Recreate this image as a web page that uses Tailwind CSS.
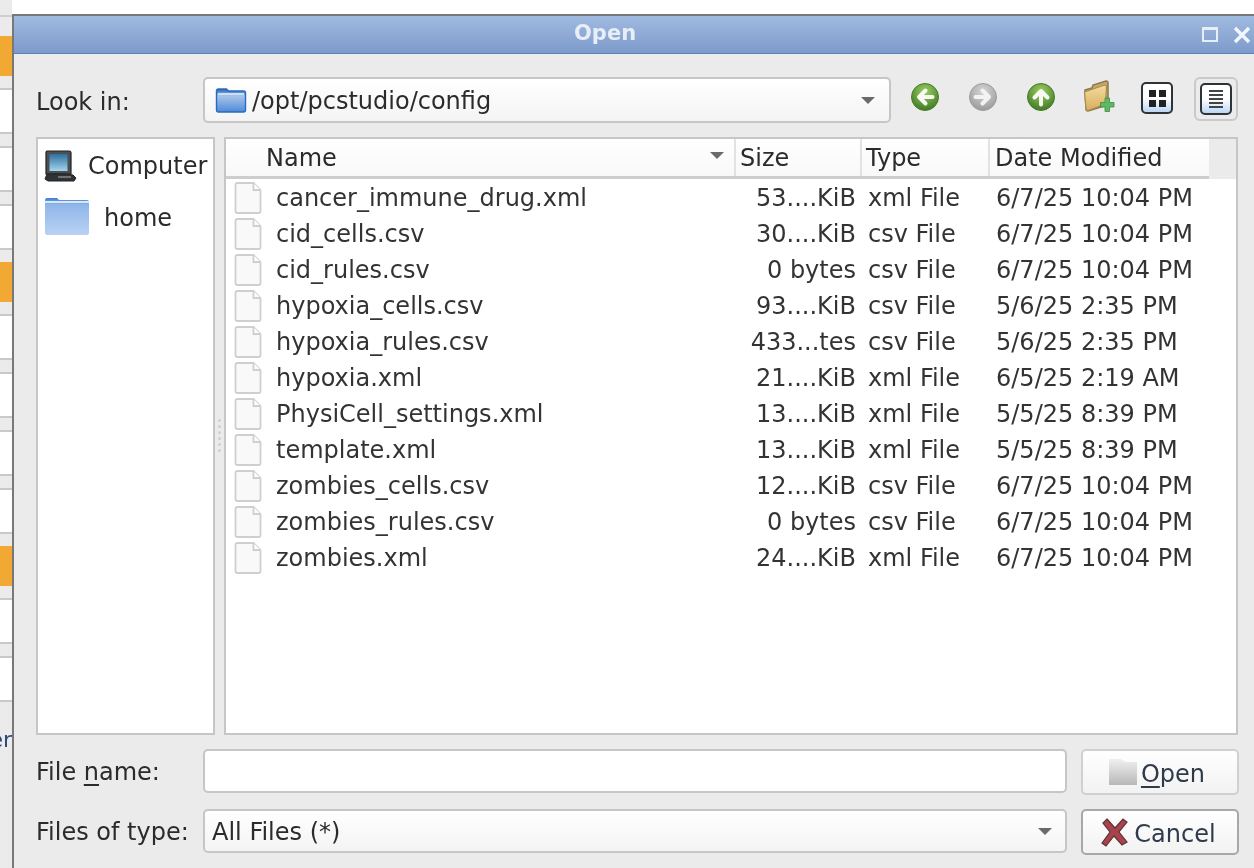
<!DOCTYPE html>
<html lang="en">
  <head>
    <meta charset="UTF-8" />
    <title>Open</title>
    <script src="https://cdn.jsdelivr.net/npm/@tailwindcss/browser@4"></script>
  </head>
  <body class="bg-white">
    <div class="flex w-[1254px] h-[868px] overflow-hidden bg-white text-[#2b2b2b] text-[24px] leading-none blur-[0.4px] font-['DejaVu_Sans',sans-serif]">
      <!-- App behind the dialog -->
      <div class="flex flex-col w-[12px] shrink-0 pt-[15px] bg-[#ebebeb] relative">
        <div class="h-[21px] border-t-2 border-[#cfcfcf]"></div>
        <div class="h-[40px] bg-[#f2a933]"></div>
        <div class="h-[12px]"></div>
        <div class="h-[46px] bg-white border-y-2 border-[#c9c9c9]"></div>
        <div class="h-[12px]"></div>
        <div class="h-[46px] bg-white border-y-2 border-[#c9c9c9]"></div>
        <div class="h-[12px]"></div>
        <div class="h-[46px] bg-white border-y-2 border-[#c9c9c9]"></div>
        <div class="h-[12px]"></div>
        <div class="h-[40px] bg-[#f2a933]"></div>
        <div class="h-[12px]"></div>
        <div class="h-[46px] bg-white border-y-2 border-[#c9c9c9]"></div>
        <div class="h-[12px]"></div>
        <div class="h-[46px] bg-white border-y-2 border-[#c9c9c9]"></div>
        <div class="h-[12px]"></div>
        <div class="h-[46px] bg-white border-y-2 border-[#c9c9c9]"></div>
        <div class="h-[12px]"></div>
        <div class="h-[46px] bg-white border-y-2 border-[#c9c9c9]"></div>
        <div class="h-[12px]"></div>
        <div class="h-[40px] bg-[#f2a933]"></div>
        <div class="h-[12px]"></div>
        <div class="h-[46px] bg-white border-y-2 border-[#c9c9c9]"></div>
        <div class="h-[12px]"></div>
        <div class="h-[46px] bg-white border-y-2 border-[#c9c9c9]"></div>
        <div class="absolute top-[729px] right-0 text-[#2b4a7a] text-[22px]">er</div>
      </div>

      <!-- Dialog -->
      <div class="flex flex-col flex-1 mt-[14px] border-l-2 border-t-2 border-[#787878] bg-[#ebebeb]">
        <!-- Title bar -->
        <div class="flex items-center h-[38px] shrink-0 pl-[560px] border-b border-[#5f80b5] bg-gradient-to-b from-[#a0bbe0] to-[#7d9acb] text-white">
          <span class="w-[628px] pb-[2px] text-[21px] font-bold text-[#e8eef8]">Open</span>
          <span class="w-[16px] h-[15px] border-2 border-t-[3px] border-[#e8eef8]"></span>
          <svg class="ml-[15px]" width="18" height="18" viewBox="0 0 18 18"><path d="M2 2l14 14M16 2L2 16" stroke="#f2f5fb" stroke-width="3.4" /></svg>
        </div>

        <div class="flex flex-col flex-1 pl-[22px] pr-[15px] pt-[23px]">
          <!-- Look in -->
          <div class="flex items-start h-[60px] shrink-0">
            <span class="w-[167px] pt-[13px]">Look in:</span>
            <div class="flex items-center w-[688px] h-[46px] rounded-[5px] border-2 border-[#c6c6c6] bg-gradient-to-b from-white to-[#f4f4f4] pl-[10px] pr-[14px]">
              <svg width="32" height="28" viewBox="0 0 32 28"><defs><linearGradient id="fa" x1="0" y1="0" x2="0" y2="1"><stop offset="0" stop-color="#1f5fb4" /><stop offset="0.3" stop-color="#a8c4ea" /><stop offset="1" stop-color="#4f8ad8" /></linearGradient></defs><path d="M1.5 5q0-2 2-2h8l2 2h15q2 0 2 2v17q0 2-2 2h-25q-2 0-2-2z" fill="url(#fa)" stroke="#2a6bc0" stroke-width="1.4" /><path d="M3 8h26" stroke="#e8f0fb" stroke-width="1.5" /></svg>
              <span class="ml-[5px] pt-[2px] flex-1">/opt/pcstudio/config</span>
              <span class="w-0 h-0 border-x-[7px] border-x-transparent border-t-[7px] border-t-[#6a6a6a]"></span>
            </div>
            <div class="flex items-start">
              <!-- back -->
              <svg class="ml-[19px] mt-[5px]" width="30" height="30" viewBox="0 0 30 30"><defs><radialGradient id="gr" cx="0.5" cy="0.3" r="0.75"><stop offset="0" stop-color="#9ccf62" /><stop offset="1" stop-color="#3a7420" /></radialGradient><radialGradient id="gy" cx="0.5" cy="0.3" r="0.75"><stop offset="0" stop-color="#d6d6d6" /><stop offset="1" stop-color="#979797" /></radialGradient></defs><circle cx="15" cy="15" r="13.5" fill="url(#gr)" stroke="#4a7d2c" stroke-width="1" /><path d="M22.500 15H9.500M15.500 8.500L9 15l6.500 6.500" fill="none" stroke="#f6f8f2" stroke-width="4" stroke-linecap="round" stroke-linejoin="round" /></svg>
              <!-- forward -->
              <svg class="ml-[28px] mt-[5px]" width="30" height="30" viewBox="0 0 30 30"><circle cx="15" cy="15" r="13.5" fill="url(#gy)" stroke="#9d9d9d" stroke-width="1" /><path d="M7.500 15h13M14.500 8.500L21 15l-6.500 6.500" fill="none" stroke="#f3f3f3" stroke-width="4" stroke-linecap="round" stroke-linejoin="round" /></svg>
              <!-- up -->
              <svg class="ml-[28px] mt-[5px]" width="30" height="30" viewBox="0 0 30 30"><circle cx="15" cy="15" r="13.5" fill="url(#gr)" stroke="#4a7d2c" stroke-width="1" /><path d="M15 22.500V9.500M8.500 15.500L15 9l6.500 6.500" fill="none" stroke="#f6f8f2" stroke-width="4" stroke-linecap="round" stroke-linejoin="round" /></svg>
              <!-- new folder -->
              <svg class="ml-[26px] mt-[2px]" width="34" height="34" viewBox="0 0 34 34"><defs><linearGradient id="fy" x1="0" y1="0" x2="0" y2="1"><stop offset="0" stop-color="#f3dc9c" /><stop offset="1" stop-color="#d9ae5e" /></linearGradient></defs><path d="M3 11l7-2 1-3 13-4q2 0 2 2v22L6 32q-2 0-2-2z" fill="#c9a866" stroke="#8c7a4e" stroke-width="1.500" /><path d="M2.500 13l20-7q2 0 2 2l-1 17L6 31.500q-2 0-2-2z" fill="url(#fy)" stroke="#a88c54" stroke-width="1.200" /><path d="M23 19h4.500v4.500H32V28h-4.500v4.500H23V28h-4.500v-4.500H23z" fill="#5fb864" stroke="#3f8c45" stroke-width="0.8" /></svg>
              <!-- icon view -->
              <div class="flex items-center justify-center ml-[25px] mt-[5px] w-[32px] h-[32px] rounded-[5px] border-2 border-[#2e3338] bg-gradient-to-b from-white via-white to-[#bcd6f5]">
                <div class="grid grid-cols-2 gap-[3px]">
                  <span class="w-[7px] h-[7px] bg-[#222]"></span><span class="w-[7px] h-[7px] bg-[#222]"></span>
                  <span class="w-[7px] h-[7px] bg-[#222]"></span><span class="w-[7px] h-[7px] bg-[#222]"></span>
                </div>
              </div>
              <!-- list view, checked -->
              <div class="flex items-center justify-center ml-[21px] w-[44px] h-[44px] rounded-[6px] border-2 border-[#c9c9c9]">
                <div class="flex flex-col items-center justify-center gap-[2px] w-[32px] h-[32px] rounded-[5px] border-2 border-[#2e3338] bg-gradient-to-b from-white via-white to-[#bcd6f5]">
                  <span class="w-[14px] h-[2px] bg-[#444]"></span><span class="w-[14px] h-[2px] bg-[#444]"></span>
                  <span class="w-[14px] h-[2px] bg-[#444]"></span><span class="w-[14px] h-[2px] bg-[#444]"></span>
                  <span class="w-[14px] h-[2px] bg-[#444]"></span>
                </div>
              </div>
            </div>
          </div>

          <!-- Sidebar and file list -->
          <div class="flex h-[598px] shrink-0">
            <div class="w-[179px] shrink-0 border-2 border-[#c6c6c6] bg-white pt-[8px]">
              <div class="flex items-center h-[38px] pl-[5px]">
                <svg width="34" height="34" viewBox="0 0 34 34"><defs><linearGradient id="sc" x1="0" y1="0" x2="0" y2="1"><stop offset="0" stop-color="#2d6f9e" /><stop offset="1" stop-color="#a5d4ec" /></linearGradient></defs><path d="M4 2h22q2 0 2 2v21H3V3z" fill="#4b4f55" stroke="#222" stroke-width="1.200" /><rect x="6.500" y="5" width="18" height="17" fill="url(#sc)" /><path d="M4 25l-2 5 3 2h26l2-3-3-3-8-1z" fill="#2f3236" stroke="#222" /><path d="M15 28h13" stroke="#888" stroke-width="1.500" /></svg>
                <span class="ml-[11px]">Computer</span>
              </div>
              <div class="flex items-center h-[52px] pl-[6px] pt-[10px]">
                <svg width="46" height="40" viewBox="0 0 46 40"><defs><linearGradient id="fb" x1="0" y1="0" x2="0" y2="1"><stop offset="0" stop-color="#3f7fd0" /><stop offset="0.18" stop-color="#8fb6ea" /><stop offset="1" stop-color="#b9d2f4" /></linearGradient></defs><path d="M1 4q0-2 2-2h10l2 2h28q2 0 2 2v31q0 2-2 2H3q-2 0-2-2z" fill="url(#fb)" /><path d="M1 6h44" stroke="#dbe7f8" stroke-width="2" /></svg>
                <span class="ml-[14px] pt-[4px]">home</span>
              </div>
            </div>

            <!-- Splitter -->
            <div class="flex flex-col items-center justify-center gap-[3px] w-[9px] shrink-0 pb-[2px]">
              <span class="w-[3px] h-[3px] rounded-full bg-[#cfcfcf]"></span><span class="w-[3px] h-[3px] rounded-full bg-[#cfcfcf]"></span>
              <span class="w-[3px] h-[3px] rounded-full bg-[#cfcfcf]"></span><span class="w-[3px] h-[3px] rounded-full bg-[#cfcfcf]"></span>
              <span class="w-[3px] h-[3px] rounded-full bg-[#cfcfcf]"></span><span class="w-[3px] h-[3px] rounded-full bg-[#cfcfcf]"></span>
            </div>

            <div class="flex flex-col w-[1014px] shrink-0 border-2 border-[#c6c6c6] bg-white">
              <div class="flex h-[40px] shrink-0 bg-[#ebebeb]">
                <div class="flex w-[983px] h-[40px] border-b-[3px] border-[#cdcdcd] bg-gradient-to-b from-white to-[#f8f8f8] text-[#2b2b2b]">
                  <div class="flex items-center w-[510px] pl-[40px] pr-[10px] border-r-2 border-[#e2e2e2]">
                    <span class="flex-1">Name</span>
                    <span class="w-0 h-0 border-x-[7px] border-x-transparent border-t-[7px] border-t-[#6a6a6a] mb-[5px]"></span>
                  </div>
                  <div class="flex items-center w-[126px] pl-[4px] border-r-2 border-[#e2e2e2]">Size</div>
                  <div class="flex items-center w-[128px] pl-[4px] border-r-2 border-[#e2e2e2]">Type</div>
                  <div class="flex items-center flex-1 pl-[5px]">Date Modified</div>
                </div>
              </div>
              <div id="file-rows" class="pt-[1px]"></div>
            </div>
          </div>

          <!-- File name -->
          <div class="flex items-start mt-[14px] h-[60px] shrink-0">
            <span class="w-[167px] pt-[11px]">File <span class="underline underline-offset-[4px]">n</span>ame:</span>
            <div class="w-[864px] h-[44px] rounded-[5px] border-2 border-[#c6c6c6] bg-white"></div>
            <button class="flex items-center justify-center ml-[14px] pr-[8px] w-[158px] h-[46px] rounded-[5px] border-2 border-[#d0d0d0] bg-gradient-to-b from-white to-[#f2f2f2]">
              <svg width="32" height="32" viewBox="0 0 32 32"><defs><linearGradient id="og" x1="0" y1="0" x2="0" y2="1"><stop offset="0" stop-color="#f0f0f0" /><stop offset="1" stop-color="#b8b8b8" /></linearGradient></defs><path d="M2 3h12l4 3h12v23H2z" fill="url(#og)" /></svg>
              <span class="ml-[2px] pt-[3px] text-[#2f3a4a]"><span class="underline underline-offset-[4px]">O</span>pen</span>
            </button>
          </div>

          <!-- Files of type -->
          <div class="flex items-start h-[46px] shrink-0">
            <span class="w-[167px] pt-[11px]">Files of type:</span>
            <div class="flex items-center w-[864px] h-[44px] rounded-[5px] border-2 border-[#c6c6c6] bg-gradient-to-b from-white to-[#f4f4f4] pl-[7px] pr-[13px]">
              <span class="flex-1 pt-[2px]">All Files (*)</span>
              <span class="w-0 h-0 border-x-[7px] border-x-transparent border-t-[7px] border-t-[#6a6a6a]"></span>
            </div>
            <button class="flex items-center justify-center ml-[14px] pr-[4px] w-[158px] h-[46px] rounded-[5px] border-2 border-[#a8a8a8] bg-gradient-to-b from-white to-[#f2f2f2]">
              <svg width="30" height="32" viewBox="0 0 30 32"><path d="M7 3l8 9 8-9 4 3-8 10 8 10-5 3-8-9-8 10-4-3 8-11-7-9z" fill="#a8434b" stroke="#5c3236" stroke-width="1.200" /></svg>
              <span class="ml-[4px] pt-[3px] text-[#2f3a4a]">Cancel</span>
            </button>
          </div>
        </div>
      </div>
    </div>

    <script>
      const files = [
        ["cancer_immune_drug.xml", "53....KiB", "xml File", "6/7/25 10:04 PM"],
        ["cid_cells.csv", "30....KiB", "csv File", "6/7/25 10:04 PM"],
        ["cid_rules.csv", "0 bytes", "csv File", "6/7/25 10:04 PM"],
        ["hypoxia_cells.csv", "93....KiB", "csv File", "5/6/25 2:35 PM"],
        ["hypoxia_rules.csv", "433...tes", "csv File", "5/6/25 2:35 PM"],
        ["hypoxia.xml", "21....KiB", "xml File", "6/5/25 2:19 AM"],
        ["PhysiCell_settings.xml", "13....KiB", "xml File", "5/5/25 8:39 PM"],
        ["template.xml", "13....KiB", "xml File", "5/5/25 8:39 PM"],
        ["zombies_cells.csv", "12....KiB", "csv File", "6/7/25 10:04 PM"],
        ["zombies_rules.csv", "0 bytes", "csv File", "6/7/25 10:04 PM"],
        ["zombies.xml", "24....KiB", "xml File", "6/7/25 10:04 PM"],
      ];

      const pageIcon = `<svg class="ml-[7px] shrink-0" width="30" height="32" viewBox="0 0 30 32"><path d="M2.500 3q0-2 2-2h16l7 7v21q0 2-2 2h-21q-2 0-2-2z" fill="#f9f9f9" stroke="#cfcfcf" stroke-width="1.800" /><path d="M20.500 1v7h7" fill="#fff" stroke="#cfcfcf" stroke-width="1.800" /></svg>`;

      document.getElementById("file-rows").innerHTML = files
        .map(
          (f) => `
            <div class="flex items-center h-[36px] text-[#333]">
              ${pageIcon}
              <span class="w-[466px] pl-[13px]">${f[0]}</span>
              <span class="w-[127px] text-right">${f[1]}</span>
              <span class="w-[128px] pl-[12px]">${f[2]}</span>
              <span class="pl-[12px]">${f[3]}</span>
            </div>`
        )
        .join("");
    </script>
  </body>
</html>
